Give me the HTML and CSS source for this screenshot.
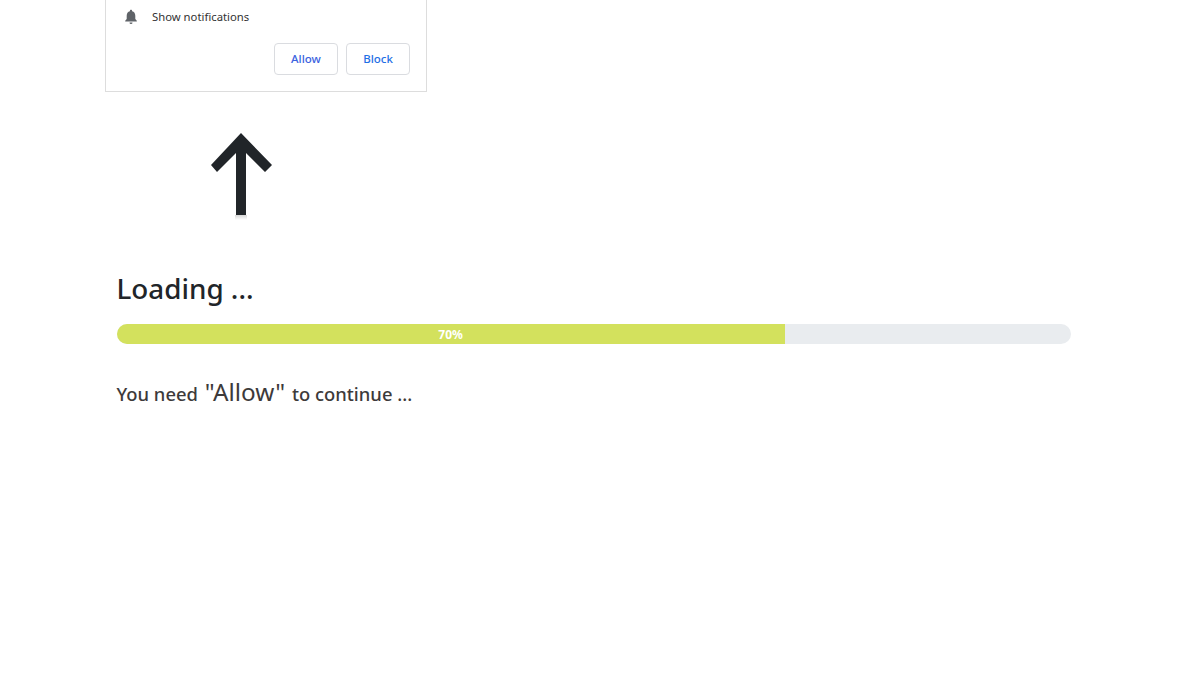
FILE: index.html
```html
<!DOCTYPE html>
<html lang="en">
<head>
    <meta charset="UTF-8">
    <meta name="viewport" content="width=device-width, initial-scale=1.0">
    <title>Loading</title>
    <link rel="stylesheet" href="styles.css">
</head>
<body>

    <!-- Notification prompt -->
    <div class="prompt">
        <div class="prompt-row">
            <svg class="bell" width="16" height="16" viewBox="0 0 16 16">
                <path d="M8 0.8c-.7 0-1.1.5-1.1 1.1v.4C4.800 2.800 3.700 4.600 3.700 6.800v3.300L2.200 11.700v.9h11.600v-.9l-1.500-1.600V6.800c0-2.200-1.100-4-3.200-4.500v-.4C9.100 1.300 8.700.8 8 .8z"/>
                <path d="M6.500 13.400a1.500 1.500 0 0 0 3 0z"/>
            </svg>
            <span>Show notifications</span>
        </div>
        <div class="prompt-actions">
            <button class="prompt-btn allow">Allow</button>
            <button class="prompt-btn block">Block</button>
        </div>
    </div>

    <!-- Arrow pointing at the prompt -->
    <svg class="arrow" width="63" height="92" viewBox="0 0 63 92">
        <defs>
            <linearGradient id="arrowShadow" x1="0" y1="0" x2="0" y2="1">
                <stop offset="0" stop-color="#000" stop-opacity="0.16"/>
                <stop offset="1" stop-color="#000" stop-opacity="0"/>
            </linearGradient>
        </defs>
        <rect x="25" y="82" width="12" height="5" fill="url(#arrowShadow)"/>
        <polygon points="31,0 62,32 55,39 36,20 36,82 26,82 26,20 7,39 1,32"/>
    </svg>

    <div class="content">
        <h1 class="title">Loading ...</h1>
        <div class="progress">
            <div class="progress-bar" style="width: 70%">70%</div>
        </div>
        <p class="message">You need <span class="message-big">"Allow"</span> to continue ...</p>
    </div>

</body>
</html>
```

FILE: styles.css
```css
body {
    margin: 0;
    padding: 0;
    background-color: #fff;
    color: #212529;
    font-family: "Noto Sans", "Open Sans", Arial, sans-serif;
}

/* Prompt */
.prompt {
    box-sizing: border-box;
    width: 322px;
    height: 92px;
    margin-left: 105px;
    padding: 7px 16px 0 17px;
    border: 1px solid #ddd;
    border-top: none;
}

.prompt-row {
    display: flex;
    align-items: center;
    gap: 13px;
    height: 19px;
    font-size: 11.3px;
    color: #333;
}

.bell {
    fill: #5f6368;
}

.prompt-actions {
    display: flex;
    justify-content: flex-end;
    gap: 8px;
    margin-top: 17px;
}

.prompt-btn {
    width: 64px;
    height: 32px;
    padding: 0 0 2px;
    background-color: #fff;
    border: 1px solid #dadce0;
    border-radius: 4px;
    font-family: inherit;
    font-size: 11.5px;
    font-weight: 500;
}

.allow {
    color: #3b63e0;
}

.block {
    color: #1f6fe5;
}

/* Arrow */
.arrow {
    display: block;
    margin: 41px 0 0 210px;
    fill: #212529;
}

/* Main content */
.content {
    width: 954.5px;
    margin: 0 0 0 116.5px;
}

.title {
    margin: 44px 0 0;
    font-size: 27.8px;
    font-weight: 500;
    line-height: 38px;
}

.progress {
    display: flex;
    height: 20px;
    margin-top: 17px;
    overflow: hidden;
    background-color: #e9ecef;
    border-radius: 10px;
}

.progress-bar {
    background-color: #d3e15d;
    color: #fff;
    font-size: 12px;
    font-weight: 700;
    line-height: 21px;
    text-align: center;
}

.message {
    margin: 30px 0 0;
    font-size: 18.4px;
    font-weight: 500;
    line-height: 36px;
    color: #3d3a3a;
}

.message-big {
    margin: 0 2px;
    font-size: 24.3px;
    font-weight: 400;
}
```
